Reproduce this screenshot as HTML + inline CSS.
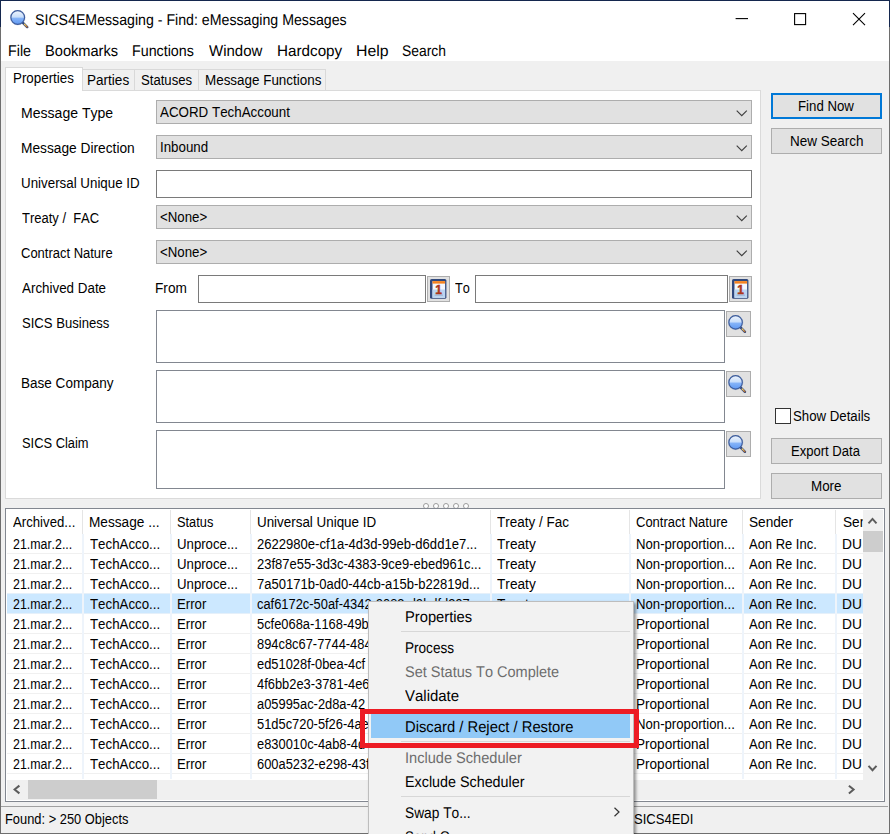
<!DOCTYPE html><html><head><meta charset="utf-8"><title>SICS4EMessaging - Find: eMessaging Messages</title><style>
html,body{margin:0;padding:0}body{width:890px;height:834px;background:#f0f0f0;position:relative;overflow:hidden;font-family:"Liberation Sans", Arial, sans-serif;}
.b{position:absolute;box-sizing:border-box;display:block}
.t{position:absolute;white-space:pre;font-kerning:none;line-height:20px;height:20px;transform-origin:0 15px;color:#000}
</style></head><body>
<div class="b" style="left:0px;top:0px;width:890px;height:61px;background:#fff;"></div>
<div class="b" style="left:5px;top:90px;width:756px;height:409px;background:#fff;border:1px solid #dadada;"></div>
<div class="b" style="left:82px;top:69px;width:53px;height:21px;background:#f0f0f0;border:1px solid #d9d9d9;border-bottom:none;border-left:none;"></div>
<div class="b" style="left:135px;top:69px;width:64px;height:21px;background:#f0f0f0;border:1px solid #d9d9d9;border-bottom:none;border-left:none;"></div>
<div class="b" style="left:199px;top:69px;width:127px;height:21px;background:#f0f0f0;border:1px solid #d9d9d9;border-bottom:none;border-left:none;"></div>
<div class="b" style="left:5px;top:67px;width:78px;height:24px;background:#fff;border:1px solid #d9d9d9;border-bottom:none;"></div>
<div class="b" style="left:156px;top:100px;width:596px;height:24px;background:#e1e1e1;border:1px solid #adadad;"></div>
<svg class="b" style="left:736px;top:110px" width="12" height="7" viewBox="0 0 12 7"><path d="M0.7 0.7 L5.75 5.75 L10.8 0.7" fill="none" stroke="#404040" stroke-width="1.15"/></svg>
<div class="b" style="left:156px;top:135px;width:596px;height:24px;background:#e1e1e1;border:1px solid #adadad;"></div>
<svg class="b" style="left:736px;top:145px" width="12" height="7" viewBox="0 0 12 7"><path d="M0.7 0.7 L5.75 5.75 L10.8 0.7" fill="none" stroke="#404040" stroke-width="1.15"/></svg>
<div class="b" style="left:156px;top:205px;width:596px;height:24px;background:#e1e1e1;border:1px solid #adadad;"></div>
<svg class="b" style="left:736px;top:215px" width="12" height="7" viewBox="0 0 12 7"><path d="M0.7 0.7 L5.75 5.75 L10.8 0.7" fill="none" stroke="#404040" stroke-width="1.15"/></svg>
<div class="b" style="left:156px;top:240px;width:596px;height:24px;background:#e1e1e1;border:1px solid #adadad;"></div>
<svg class="b" style="left:736px;top:250px" width="12" height="7" viewBox="0 0 12 7"><path d="M0.7 0.7 L5.75 5.75 L10.8 0.7" fill="none" stroke="#404040" stroke-width="1.15"/></svg>
<div class="b" style="left:156px;top:170px;width:596px;height:28px;background:#fff;border:1px solid #7a7a7a;"></div>
<div class="b" style="left:198px;top:275px;width:228px;height:28px;background:#fff;border:1px solid #7a7a7a;"></div>
<div class="b" style="left:475px;top:275px;width:253px;height:28px;background:#fff;border:1px solid #7a7a7a;"></div>
<div class="b" style="left:427px;top:276px;width:23px;height:26px;background:#e1e1e1;border:1px solid #adadad"></div>
<svg class="b" style="left:430.3px;top:279.2px" width="17" height="20" viewBox="0 0 17 20">
<rect x="0" y="0" width="16.4" height="19.8" rx="1.6" fill="#30487c"/>
<rect x="2.5" y="2.1" width="12.6" height="16.7" fill="#f4f8fe"/>
<rect x="2.5" y="10.5" width="12.6" height="8.3" fill="#bbd5f2"/>
<rect x="2.5" y="2.1" width="12.6" height="2.5" fill="#f5821f"/>
<rect x="4.6" y="15.7" width="8.4" height="0.8" fill="#8ea6c8"/>
<text x="8.7" y="14.6" text-anchor="middle" style="font:bold 12px 'Liberation Sans',sans-serif" fill="#ae361c" stroke="#ae361c" stroke-width="0.45">1</text>
</svg>
<div class="b" style="left:729px;top:276px;width:23px;height:26px;background:#e1e1e1;border:1px solid #adadad"></div>
<svg class="b" style="left:732.3px;top:279.2px" width="17" height="20" viewBox="0 0 17 20">
<rect x="0" y="0" width="16.4" height="19.8" rx="1.6" fill="#30487c"/>
<rect x="2.5" y="2.1" width="12.6" height="16.7" fill="#f4f8fe"/>
<rect x="2.5" y="10.5" width="12.6" height="8.3" fill="#bbd5f2"/>
<rect x="2.5" y="2.1" width="12.6" height="2.5" fill="#f5821f"/>
<rect x="4.6" y="15.7" width="8.4" height="0.8" fill="#8ea6c8"/>
<text x="8.7" y="14.6" text-anchor="middle" style="font:bold 12px 'Liberation Sans',sans-serif" fill="#ae361c" stroke="#ae361c" stroke-width="0.45">1</text>
</svg>
<div class="b" style="left:156px;top:310px;width:569px;height:53px;background:#fff;border:1px solid #828790;"></div>
<div class="b" style="left:726px;top:311px;width:25px;height:26px;background:#e1e1e1;border:1px solid #adadad;"></div>
<svg class="b" style="left:727.8px;top:315.2px" width="19.5" height="19.5" viewBox="0 0 20 20">
<defs><linearGradient id="g0" x1="0" y1="0" x2="0" y2="1"><stop offset="0" stop-color="#eef5fe"/><stop offset="0.47" stop-color="#c9defa"/><stop offset="0.55" stop-color="#86b4f8"/><stop offset="1" stop-color="#5f98f2"/></linearGradient>
<linearGradient id="h0" x1="0" y1="0" x2="1" y2="1"><stop offset="0" stop-color="#f8d468"/><stop offset="1" stop-color="#c06c28"/></linearGradient></defs>
<path d="M12.6 12.4 L17.4 17.2" stroke="#34497a" stroke-width="2.5" stroke-linecap="round"/>
<path d="M14.6 14.4 L17.3 17.1" stroke="url(#h0)" stroke-width="1.3" stroke-linecap="round"/>
<circle cx="7.8" cy="7.6" r="6.9" fill="url(#g0)" stroke="#3c5c9c" stroke-width="1.2"/>
<circle cx="7.8" cy="7.6" r="7.5" fill="none" stroke="#3c5c9c" stroke-opacity="0.25" stroke-width="0.8"/>
</svg>
<div class="b" style="left:156px;top:370px;width:569px;height:53px;background:#fff;border:1px solid #828790;"></div>
<div class="b" style="left:726px;top:371px;width:25px;height:26px;background:#e1e1e1;border:1px solid #adadad;"></div>
<svg class="b" style="left:727.8px;top:375.2px" width="19.5" height="19.5" viewBox="0 0 20 20">
<defs><linearGradient id="g1" x1="0" y1="0" x2="0" y2="1"><stop offset="0" stop-color="#eef5fe"/><stop offset="0.47" stop-color="#c9defa"/><stop offset="0.55" stop-color="#86b4f8"/><stop offset="1" stop-color="#5f98f2"/></linearGradient>
<linearGradient id="h1" x1="0" y1="0" x2="1" y2="1"><stop offset="0" stop-color="#f8d468"/><stop offset="1" stop-color="#c06c28"/></linearGradient></defs>
<path d="M12.6 12.4 L17.4 17.2" stroke="#34497a" stroke-width="2.5" stroke-linecap="round"/>
<path d="M14.6 14.4 L17.3 17.1" stroke="url(#h1)" stroke-width="1.3" stroke-linecap="round"/>
<circle cx="7.8" cy="7.6" r="6.9" fill="url(#g1)" stroke="#3c5c9c" stroke-width="1.2"/>
<circle cx="7.8" cy="7.6" r="7.5" fill="none" stroke="#3c5c9c" stroke-opacity="0.25" stroke-width="0.8"/>
</svg>
<div class="b" style="left:156px;top:430px;width:569px;height:59px;background:#fff;border:1px solid #828790;"></div>
<div class="b" style="left:726px;top:431px;width:25px;height:26px;background:#e1e1e1;border:1px solid #adadad;"></div>
<svg class="b" style="left:727.8px;top:435.2px" width="19.5" height="19.5" viewBox="0 0 20 20">
<defs><linearGradient id="g2" x1="0" y1="0" x2="0" y2="1"><stop offset="0" stop-color="#eef5fe"/><stop offset="0.47" stop-color="#c9defa"/><stop offset="0.55" stop-color="#86b4f8"/><stop offset="1" stop-color="#5f98f2"/></linearGradient>
<linearGradient id="h2" x1="0" y1="0" x2="1" y2="1"><stop offset="0" stop-color="#f8d468"/><stop offset="1" stop-color="#c06c28"/></linearGradient></defs>
<path d="M12.6 12.4 L17.4 17.2" stroke="#34497a" stroke-width="2.5" stroke-linecap="round"/>
<path d="M14.6 14.4 L17.3 17.1" stroke="url(#h2)" stroke-width="1.3" stroke-linecap="round"/>
<circle cx="7.8" cy="7.6" r="6.9" fill="url(#g2)" stroke="#3c5c9c" stroke-width="1.2"/>
<circle cx="7.8" cy="7.6" r="7.5" fill="none" stroke="#3c5c9c" stroke-opacity="0.25" stroke-width="0.8"/>
</svg>
<svg class="b" style="left:9.6px;top:9.8px" width="19.8" height="19.8" viewBox="0 0 20 20">
<defs><linearGradient id="g9" x1="0" y1="0" x2="0" y2="1"><stop offset="0" stop-color="#eef5fe"/><stop offset="0.47" stop-color="#c9defa"/><stop offset="0.55" stop-color="#86b4f8"/><stop offset="1" stop-color="#5f98f2"/></linearGradient>
<linearGradient id="h9" x1="0" y1="0" x2="1" y2="1"><stop offset="0" stop-color="#f8d468"/><stop offset="1" stop-color="#c06c28"/></linearGradient></defs>
<path d="M12.6 12.4 L17.4 17.2" stroke="#34497a" stroke-width="2.5" stroke-linecap="round"/>
<path d="M14.6 14.4 L17.3 17.1" stroke="url(#h9)" stroke-width="1.3" stroke-linecap="round"/>
<circle cx="7.8" cy="7.6" r="6.9" fill="url(#g9)" stroke="#3c5c9c" stroke-width="1.2"/>
<circle cx="7.8" cy="7.6" r="7.5" fill="none" stroke="#3c5c9c" stroke-opacity="0.25" stroke-width="0.8"/>
</svg>
<div class="b" style="left:771px;top:93px;width:111px;height:26px;background:#e1e1e1;border:2px solid #0078d7;"></div>
<div class="b" style="left:771px;top:128px;width:111px;height:26px;background:#e1e1e1;border:1px solid #adadad;"></div>
<div class="b" style="left:775px;top:408px;width:16px;height:16px;background:#fff;border:1px solid #333;"></div>
<div class="b" style="left:771px;top:438px;width:111px;height:26px;background:#e1e1e1;border:1px solid #adadad;"></div>
<div class="b" style="left:771px;top:473px;width:111px;height:26px;background:#e1e1e1;border:1px solid #adadad;"></div>
<div class="b" style="left:422.5px;top:502.6px;width:6px;height:6px;border-radius:50%;border:1.2px solid #9c9c9c;background:#fff;box-sizing:border-box"></div>
<div class="b" style="left:432.5px;top:502.6px;width:6px;height:6px;border-radius:50%;border:1.2px solid #9c9c9c;background:#fff;box-sizing:border-box"></div>
<div class="b" style="left:442.5px;top:502.6px;width:6px;height:6px;border-radius:50%;border:1.2px solid #9c9c9c;background:#fff;box-sizing:border-box"></div>
<div class="b" style="left:452.5px;top:502.6px;width:6px;height:6px;border-radius:50%;border:1.2px solid #9c9c9c;background:#fff;box-sizing:border-box"></div>
<div class="b" style="left:462.5px;top:502.6px;width:6px;height:6px;border-radius:50%;border:1.2px solid #9c9c9c;background:#fff;box-sizing:border-box"></div>
<div class="b" style="left:5px;top:508px;width:880px;height:294px;background:#fff;border:1px solid #828790;"></div>
<div class="b" style="left:7px;top:594px;width:856px;height:20px;background:#cce8ff;"></div>
<div class="b" style="left:7px;top:553px;width:856px;height:1px;background:#f0f0f0;"></div>
<div class="b" style="left:7px;top:573px;width:856px;height:1px;background:#f0f0f0;"></div>
<div class="b" style="left:7px;top:593px;width:856px;height:1px;background:#e5f0fa;"></div>
<div class="b" style="left:7px;top:613px;width:856px;height:1px;background:#e5f0fa;"></div>
<div class="b" style="left:7px;top:633px;width:856px;height:1px;background:#f0f0f0;"></div>
<div class="b" style="left:7px;top:653px;width:856px;height:1px;background:#f0f0f0;"></div>
<div class="b" style="left:7px;top:673px;width:856px;height:1px;background:#f0f0f0;"></div>
<div class="b" style="left:7px;top:693px;width:856px;height:1px;background:#f0f0f0;"></div>
<div class="b" style="left:7px;top:713px;width:856px;height:1px;background:#f0f0f0;"></div>
<div class="b" style="left:7px;top:733px;width:856px;height:1px;background:#f0f0f0;"></div>
<div class="b" style="left:7px;top:753px;width:856px;height:1px;background:#f0f0f0;"></div>
<div class="b" style="left:7px;top:773px;width:856px;height:1px;background:#f0f0f0;"></div>
<div class="b" style="left:82px;top:510px;width:1px;height:24px;background:#e5e5e5;"></div>
<div class="b" style="left:82px;top:534px;width:2px;height:245px;background:#eef4fb;"></div>
<div class="b" style="left:170px;top:510px;width:1px;height:24px;background:#e5e5e5;"></div>
<div class="b" style="left:170px;top:534px;width:2px;height:245px;background:#eef4fb;"></div>
<div class="b" style="left:250px;top:510px;width:1px;height:24px;background:#e5e5e5;"></div>
<div class="b" style="left:250px;top:534px;width:2px;height:245px;background:#eef4fb;"></div>
<div class="b" style="left:490px;top:510px;width:1px;height:24px;background:#e5e5e5;"></div>
<div class="b" style="left:490px;top:534px;width:2px;height:245px;background:#eef4fb;"></div>
<div class="b" style="left:629px;top:510px;width:1px;height:24px;background:#e5e5e5;"></div>
<div class="b" style="left:629px;top:534px;width:2px;height:245px;background:#eef4fb;"></div>
<div class="b" style="left:742px;top:510px;width:1px;height:24px;background:#e5e5e5;"></div>
<div class="b" style="left:742px;top:534px;width:2px;height:245px;background:#eef4fb;"></div>
<div class="b" style="left:835px;top:510px;width:1px;height:24px;background:#e5e5e5;"></div>
<div class="b" style="left:835px;top:534px;width:2px;height:245px;background:#eef4fb;"></div>
<div class="b" style="left:863px;top:510px;width:20px;height:290px;background:#f0f0f0;"></div>
<div class="b" style="left:863px;top:531px;width:20px;height:21px;background:#cdcdcd;"></div>
<div class="b" style="left:7px;top:780px;width:876px;height:20px;background:#f0f0f0;"></div>
<div class="b" style="left:28px;top:780px;width:129px;height:19px;background:#cdcdcd;"></div>
<svg class="b" style="left:0;top:500px" width="890" height="310" viewBox="0 500 890 310"><g fill="none" stroke="#5c5c5c" stroke-width="2" stroke-linejoin="miter"><path d="M868.5 523.3 L872.5 518.9 L876.5 523.3"/><path d="M868.5 765.8 L872.5 770.2 L876.5 765.8"/><path d="M848.9 785.7 L853.6 789.6 L848.9 793.5"/><path d="M19.4 785.6 L14.6 789.5 L19.4 793.4"/></g></svg>
<div class="b" style="left:1px;top:806px;width:887px;height:1px;background:#a0a0a0;"></div>
<span class="t" style="left:13px;top:68px;font-size:14px;transform:scaleX(0.9538);">Properties</span>
<span class="t" style="left:87px;top:70px;font-size:14px;transform:scaleX(0.9681);">Parties</span>
<span class="t" style="left:141px;top:70px;font-size:14px;transform:scaleX(0.9384);">Statuses</span>
<span class="t" style="left:205px;top:70px;font-size:14px;transform:scaleX(0.9586);">Message Functions</span>
<span class="t" style="left:35px;top:11px;font-size:15.5px;text-rendering:geometricPrecision;transform:scaleX(0.9136);">SICS4EMessaging - Find: eMessaging Messages</span>
<span class="t" style="left:8px;top:42px;font-size:15.5px;text-rendering:geometricPrecision;transform:scaleX(0.9206);">File</span>
<span class="t" style="left:45px;top:42px;font-size:15.5px;text-rendering:geometricPrecision;transform:scaleX(0.9429);">Bookmarks</span>
<span class="t" style="left:132px;top:42px;font-size:15.5px;text-rendering:geometricPrecision;transform:scaleX(0.9206);">Functions</span>
<span class="t" style="left:209px;top:42px;font-size:15.5px;text-rendering:geometricPrecision;transform:scaleX(0.9672);">Window</span>
<span class="t" style="left:277px;top:42px;font-size:15.5px;text-rendering:geometricPrecision;transform:scaleX(0.9827);">Hardcopy</span>
<span class="t" style="left:356px;top:42px;font-size:15.5px;text-rendering:geometricPrecision;transform:scaleX(1.0220);">Help</span>
<span class="t" style="left:402px;top:42px;font-size:15.5px;text-rendering:geometricPrecision;transform:scaleX(0.8941);">Search</span>
<span class="t" style="left:21px;top:103px;font-size:14px;transform:scaleX(1.0038);">Message Type</span>
<span class="t" style="left:21px;top:138px;font-size:14px;transform:scaleX(0.9811);">Message Direction</span>
<span class="t" style="left:21px;top:173px;font-size:14px;transform:scaleX(0.9534);">Universal Unique ID</span>
<span class="t" style="left:22px;top:208px;font-size:14px;transform:scaleX(0.9269);">Treaty /&nbsp; FAC</span>
<span class="t" style="left:21px;top:243px;font-size:14px;transform:scaleX(0.9273);">Contract Nature</span>
<span class="t" style="left:22px;top:278px;font-size:14px;transform:scaleX(0.9558);">Archived Date</span>
<span class="t" style="left:22px;top:313px;font-size:14px;transform:scaleX(0.9352);">SICS Business</span>
<span class="t" style="left:21px;top:373px;font-size:14px;transform:scaleX(0.9670);">Base Company</span>
<span class="t" style="left:22px;top:433px;font-size:14px;transform:scaleX(0.9202);">SICS Claim</span>
<span class="t" style="left:160px;top:102px;font-size:14px;transform:scaleX(0.9544);">ACORD TechAccount</span>
<span class="t" style="left:160px;top:137px;font-size:14px;transform:scaleX(0.9523);">Inbound</span>
<span class="t" style="left:160px;top:207px;font-size:14px;transform:scaleX(0.9477);">&lt;None&gt;</span>
<span class="t" style="left:160px;top:242px;font-size:14px;transform:scaleX(0.9477);">&lt;None&gt;</span>
<span class="t" style="left:155px;top:278px;font-size:14px;transform:scaleX(0.9759);">From</span>
<span class="t" style="left:455px;top:278px;font-size:14px;transform:scaleX(0.9066);">To</span>
<span class="t" style="left:798px;top:96px;font-size:14px;transform:scaleX(0.9449);">Find Now</span>
<span class="t" style="left:790px;top:131px;font-size:14px;transform:scaleX(0.9640);">New Search</span>
<span class="t" style="left:793px;top:406px;font-size:14px;transform:scaleX(0.9452);">Show Details</span>
<span class="t" style="left:791px;top:441px;font-size:14px;transform:scaleX(0.9325);">Export Data</span>
<span class="t" style="left:811px;top:476px;font-size:14px;transform:scaleX(0.9558);">More</span>
<span class="t" style="left:13px;top:512px;font-size:14px;transform:scaleX(0.9418);">Archived...</span>
<span class="t" style="left:89px;top:512px;font-size:14px;transform:scaleX(0.9742);">Message ...</span>
<span class="t" style="left:177px;top:512px;font-size:14px;transform:scaleX(0.9146);">Status</span>
<span class="t" style="left:257px;top:512px;font-size:14px;transform:scaleX(0.9567);">Universal Unique ID</span>
<span class="t" style="left:497px;top:512px;font-size:14px;transform:scaleX(0.9630);">Treaty / Fac</span>
<span class="t" style="left:636px;top:512px;font-size:14px;transform:scaleX(0.9283);">Contract Nature</span>
<span class="t" style="left:749px;top:512px;font-size:14px;transform:scaleX(0.9745);">Sender</span>
<div class="b" style="left:0;top:0;width:862.5px;height:834px;overflow:hidden"><span class="t" style="left:843px;top:512px;font-size:14px;transform:scaleX(0.9745);">Sender</span></div>
<span class="t" style="left:13px;top:534px;font-size:14px;transform:scaleX(0.8847);">21.mar.2...</span>
<span class="t" style="left:90px;top:534px;font-size:14px;transform:scaleX(0.9498);">TechAcco...</span>
<span class="t" style="left:177px;top:534px;font-size:14px;transform:scaleX(0.9432);">Unproce...</span>
<span class="t" style="left:257px;top:534px;font-size:14px;transform:scaleX(0.9331);">2622980e-cf1a-4d3d-99eb-d6dd1e7...</span>
<span class="t" style="left:497px;top:534px;font-size:14px;transform:scaleX(0.9757);">Treaty</span>
<span class="t" style="left:636px;top:534px;font-size:14px;transform:scaleX(0.9406);">Non-proportion...</span>
<span class="t" style="left:749px;top:534px;font-size:14px;transform:scaleX(0.9265);">Aon Re Inc.</span>
<span class="t" style="left:842px;top:534px;font-size:14px;transform:scaleX(0.9833);">DU</span>
<span class="t" style="left:13px;top:554px;font-size:14px;transform:scaleX(0.8847);">21.mar.2...</span>
<span class="t" style="left:90px;top:554px;font-size:14px;transform:scaleX(0.9498);">TechAcco...</span>
<span class="t" style="left:177px;top:554px;font-size:14px;transform:scaleX(0.9432);">Unproce...</span>
<span class="t" style="left:257px;top:554px;font-size:14px;transform:scaleX(0.9265);">23f87e55-3d3c-4383-9ce9-ebed961c...</span>
<span class="t" style="left:497px;top:554px;font-size:14px;transform:scaleX(0.9757);">Treaty</span>
<span class="t" style="left:636px;top:554px;font-size:14px;transform:scaleX(0.9406);">Non-proportion...</span>
<span class="t" style="left:749px;top:554px;font-size:14px;transform:scaleX(0.9265);">Aon Re Inc.</span>
<span class="t" style="left:842px;top:554px;font-size:14px;transform:scaleX(0.9833);">DU</span>
<span class="t" style="left:13px;top:574px;font-size:14px;transform:scaleX(0.8847);">21.mar.2...</span>
<span class="t" style="left:90px;top:574px;font-size:14px;transform:scaleX(0.9498);">TechAcco...</span>
<span class="t" style="left:177px;top:574px;font-size:14px;transform:scaleX(0.9432);">Unproce...</span>
<span class="t" style="left:257px;top:574px;font-size:14px;transform:scaleX(0.9296);">7a50171b-0ad0-44cb-a15b-b22819d...</span>
<span class="t" style="left:497px;top:574px;font-size:14px;transform:scaleX(0.9757);">Treaty</span>
<span class="t" style="left:636px;top:574px;font-size:14px;transform:scaleX(0.9406);">Non-proportion...</span>
<span class="t" style="left:749px;top:574px;font-size:14px;transform:scaleX(0.9265);">Aon Re Inc.</span>
<span class="t" style="left:842px;top:574px;font-size:14px;transform:scaleX(0.9833);">DU</span>
<span class="t" style="left:13px;top:594px;font-size:14px;transform:scaleX(0.8847);">21.mar.2...</span>
<span class="t" style="left:90px;top:594px;font-size:14px;transform:scaleX(0.9498);">TechAcco...</span>
<span class="t" style="left:177px;top:594px;font-size:14px;transform:scaleX(0.9416);">Error</span>
<span class="t" style="left:257px;top:594px;font-size:14px;transform:scaleX(0.9201);">caf6172c-50af-4342-9083-d9bdfd397...</span>
<span class="t" style="left:497px;top:594px;font-size:14px;transform:scaleX(0.9757);">Treaty</span>
<span class="t" style="left:636px;top:594px;font-size:14px;transform:scaleX(0.9406);">Non-proportion...</span>
<span class="t" style="left:749px;top:594px;font-size:14px;transform:scaleX(0.9265);">Aon Re Inc.</span>
<span class="t" style="left:842px;top:594px;font-size:14px;transform:scaleX(0.9833);">DU</span>
<span class="t" style="left:13px;top:614px;font-size:14px;transform:scaleX(0.8847);">21.mar.2...</span>
<span class="t" style="left:90px;top:614px;font-size:14px;transform:scaleX(0.9498);">TechAcco...</span>
<span class="t" style="left:177px;top:614px;font-size:14px;transform:scaleX(0.9416);">Error</span>
<span class="t" style="left:257px;top:614px;font-size:14px;transform:scaleX(0.9201);">5cfe068a-1168-49b</span>
<span class="t" style="left:636px;top:614px;font-size:14px;transform:scaleX(0.9691);">Proportional</span>
<span class="t" style="left:749px;top:614px;font-size:14px;transform:scaleX(0.9265);">Aon Re Inc.</span>
<span class="t" style="left:842px;top:614px;font-size:14px;transform:scaleX(0.9833);">DU</span>
<span class="t" style="left:13px;top:634px;font-size:14px;transform:scaleX(0.8847);">21.mar.2...</span>
<span class="t" style="left:90px;top:634px;font-size:14px;transform:scaleX(0.9498);">TechAcco...</span>
<span class="t" style="left:177px;top:634px;font-size:14px;transform:scaleX(0.9416);">Error</span>
<span class="t" style="left:257px;top:634px;font-size:14px;transform:scaleX(0.9201);">894c8c67-7744-484</span>
<span class="t" style="left:636px;top:634px;font-size:14px;transform:scaleX(0.9691);">Proportional</span>
<span class="t" style="left:749px;top:634px;font-size:14px;transform:scaleX(0.9265);">Aon Re Inc.</span>
<span class="t" style="left:842px;top:634px;font-size:14px;transform:scaleX(0.9833);">DU</span>
<span class="t" style="left:13px;top:654px;font-size:14px;transform:scaleX(0.8847);">21.mar.2...</span>
<span class="t" style="left:90px;top:654px;font-size:14px;transform:scaleX(0.9498);">TechAcco...</span>
<span class="t" style="left:177px;top:654px;font-size:14px;transform:scaleX(0.9416);">Error</span>
<span class="t" style="left:257px;top:654px;font-size:14px;transform:scaleX(0.9201);">ed51028f-0bea-4cf</span>
<span class="t" style="left:636px;top:654px;font-size:14px;transform:scaleX(0.9691);">Proportional</span>
<span class="t" style="left:749px;top:654px;font-size:14px;transform:scaleX(0.9265);">Aon Re Inc.</span>
<span class="t" style="left:842px;top:654px;font-size:14px;transform:scaleX(0.9833);">DU</span>
<span class="t" style="left:13px;top:674px;font-size:14px;transform:scaleX(0.8847);">21.mar.2...</span>
<span class="t" style="left:90px;top:674px;font-size:14px;transform:scaleX(0.9498);">TechAcco...</span>
<span class="t" style="left:177px;top:674px;font-size:14px;transform:scaleX(0.9416);">Error</span>
<span class="t" style="left:257px;top:674px;font-size:14px;transform:scaleX(0.9201);">4f6bb2e3-3781-4e6</span>
<span class="t" style="left:636px;top:674px;font-size:14px;transform:scaleX(0.9691);">Proportional</span>
<span class="t" style="left:749px;top:674px;font-size:14px;transform:scaleX(0.9265);">Aon Re Inc.</span>
<span class="t" style="left:842px;top:674px;font-size:14px;transform:scaleX(0.9833);">DU</span>
<span class="t" style="left:13px;top:694px;font-size:14px;transform:scaleX(0.8847);">21.mar.2...</span>
<span class="t" style="left:90px;top:694px;font-size:14px;transform:scaleX(0.9498);">TechAcco...</span>
<span class="t" style="left:177px;top:694px;font-size:14px;transform:scaleX(0.9416);">Error</span>
<span class="t" style="left:257px;top:694px;font-size:14px;transform:scaleX(0.9201);">a05995ac-2d8a-42</span>
<span class="t" style="left:636px;top:694px;font-size:14px;transform:scaleX(0.9691);">Proportional</span>
<span class="t" style="left:749px;top:694px;font-size:14px;transform:scaleX(0.9265);">Aon Re Inc.</span>
<span class="t" style="left:842px;top:694px;font-size:14px;transform:scaleX(0.9833);">DU</span>
<span class="t" style="left:13px;top:714px;font-size:14px;transform:scaleX(0.8847);">21.mar.2...</span>
<span class="t" style="left:90px;top:714px;font-size:14px;transform:scaleX(0.9498);">TechAcco...</span>
<span class="t" style="left:177px;top:714px;font-size:14px;transform:scaleX(0.9416);">Error</span>
<span class="t" style="left:257px;top:714px;font-size:14px;transform:scaleX(0.9201);">51d5c720-5f26-4ae</span>
<span class="t" style="left:636px;top:714px;font-size:14px;transform:scaleX(0.9406);">Non-proportion...</span>
<span class="t" style="left:749px;top:714px;font-size:14px;transform:scaleX(0.9265);">Aon Re Inc.</span>
<span class="t" style="left:842px;top:714px;font-size:14px;transform:scaleX(0.9833);">DU</span>
<span class="t" style="left:13px;top:734px;font-size:14px;transform:scaleX(0.8847);">21.mar.2...</span>
<span class="t" style="left:90px;top:734px;font-size:14px;transform:scaleX(0.9498);">TechAcco...</span>
<span class="t" style="left:177px;top:734px;font-size:14px;transform:scaleX(0.9416);">Error</span>
<span class="t" style="left:257px;top:734px;font-size:14px;transform:scaleX(0.9201);">e830010c-4ab8-4d</span>
<span class="t" style="left:636px;top:734px;font-size:14px;transform:scaleX(0.9691);">Proportional</span>
<span class="t" style="left:749px;top:734px;font-size:14px;transform:scaleX(0.9265);">Aon Re Inc.</span>
<span class="t" style="left:842px;top:734px;font-size:14px;transform:scaleX(0.9833);">DU</span>
<span class="t" style="left:13px;top:754px;font-size:14px;transform:scaleX(0.8847);">21.mar.2...</span>
<span class="t" style="left:90px;top:754px;font-size:14px;transform:scaleX(0.9498);">TechAcco...</span>
<span class="t" style="left:177px;top:754px;font-size:14px;transform:scaleX(0.9416);">Error</span>
<span class="t" style="left:257px;top:754px;font-size:14px;transform:scaleX(0.9201);">600a5232-e298-43f</span>
<span class="t" style="left:636px;top:754px;font-size:14px;transform:scaleX(0.9691);">Proportional</span>
<span class="t" style="left:749px;top:754px;font-size:14px;transform:scaleX(0.9265);">Aon Re Inc.</span>
<span class="t" style="left:842px;top:754px;font-size:14px;transform:scaleX(0.9833);">DU</span>
<span class="t" style="left:5px;top:809px;font-size:14px;transform:scaleX(0.9192);">Found: &gt; 250 Objects</span>
<span class="t" style="left:634px;top:809px;font-size:14px;transform:scaleX(0.9308);">SICS4EDI</span>
<div class="b" style="left:0;top:0;width:890px;height:1px;background:#14274e"></div>
<div class="b" style="left:0;top:0;width:1px;height:27px;background:#14274e"></div>
<div class="b" style="left:889px;top:0;width:1px;height:27px;background:#14274e"></div>
<div class="b" style="left:0;top:27px;width:1px;height:807px;background:#6e6e6e"></div>
<div class="b" style="left:889px;top:27px;width:1px;height:807px;background:#6e6e6e"></div>
<div class="b" style="left:0;top:833px;width:890px;height:1px;background:#6e6e6e"></div>
<svg class="b" style="left:730px;top:8px" width="150" height="22" viewBox="0 0 150 22"><g fill="none" stroke="#000" stroke-width="1.1"><path d="M5.6 10.6 H18"/><rect x="64.6" y="5.6" width="11" height="11"/><path d="M123 5.2 L135 17.2 M135 5.2 L123 17.2"/></g></svg>
<div class="b" style="left:368px;top:601px;width:266px;height:240px;background:#f2f2f2;border:1px solid #bdbdbd;box-sizing:border-box;box-shadow:2px 2px 3px rgba(0,0,0,0.42)"></div>
<div class="b" style="left:401px;top:631px;width:229px;height:1px;background:#d7d7d7"></div>
<div class="b" style="left:401px;top:741px;width:229px;height:1px;background:#d7d7d7"></div>
<div class="b" style="left:401px;top:796px;width:229px;height:1px;background:#d7d7d7"></div>
<div class="b" style="left:371px;top:714px;width:259px;height:24px;background:#91c9f7"></div>
<div class="b" style="left:360px;top:709px;width:279px;height:39px;border:5px solid #ed1c24;box-sizing:border-box"></div>
<svg class="b" style="left:613px;top:807px" width="8" height="10" viewBox="0 0 8 10"><path d="M1.5 0.8 L6 5 L1.5 9.2" fill="none" stroke="#333" stroke-width="1.2"/></svg>
<span class="t" style="left:405px;top:608px;font-size:15.5px;text-rendering:geometricPrecision;transform:scaleX(0.9493);">Properties</span>
<span class="t" style="left:405px;top:639px;font-size:15.5px;text-rendering:geometricPrecision;transform:scaleX(0.8756);">Process</span>
<span class="t" style="left:405px;top:663px;font-size:15.5px;text-rendering:geometricPrecision;color:#6d6d6d;transform:scaleX(0.9370);">Set Status To Complete</span>
<span class="t" style="left:405px;top:687px;font-size:15.5px;text-rendering:geometricPrecision;transform:scaleX(0.9660);">Validate</span>
<span class="t" style="left:405px;top:718px;font-size:15.5px;text-rendering:geometricPrecision;transform:scaleX(0.9542);">Discard / Reject / Restore</span>
<span class="t" style="left:405px;top:749px;font-size:15.5px;text-rendering:geometricPrecision;color:#6d6d6d;transform:scaleX(0.9411);">Include Scheduler</span>
<span class="t" style="left:405px;top:773px;font-size:15.5px;text-rendering:geometricPrecision;transform:scaleX(0.9244);">Exclude Scheduler</span>
<span class="t" style="left:405px;top:804px;font-size:15.5px;text-rendering:geometricPrecision;transform:scaleX(0.8860);">Swap To...</span>
<span class="t" style="left:405px;top:828px;font-size:15.5px;text-rendering:geometricPrecision;transform:scaleX(0.8552);">Send O...</span>
</body></html>
